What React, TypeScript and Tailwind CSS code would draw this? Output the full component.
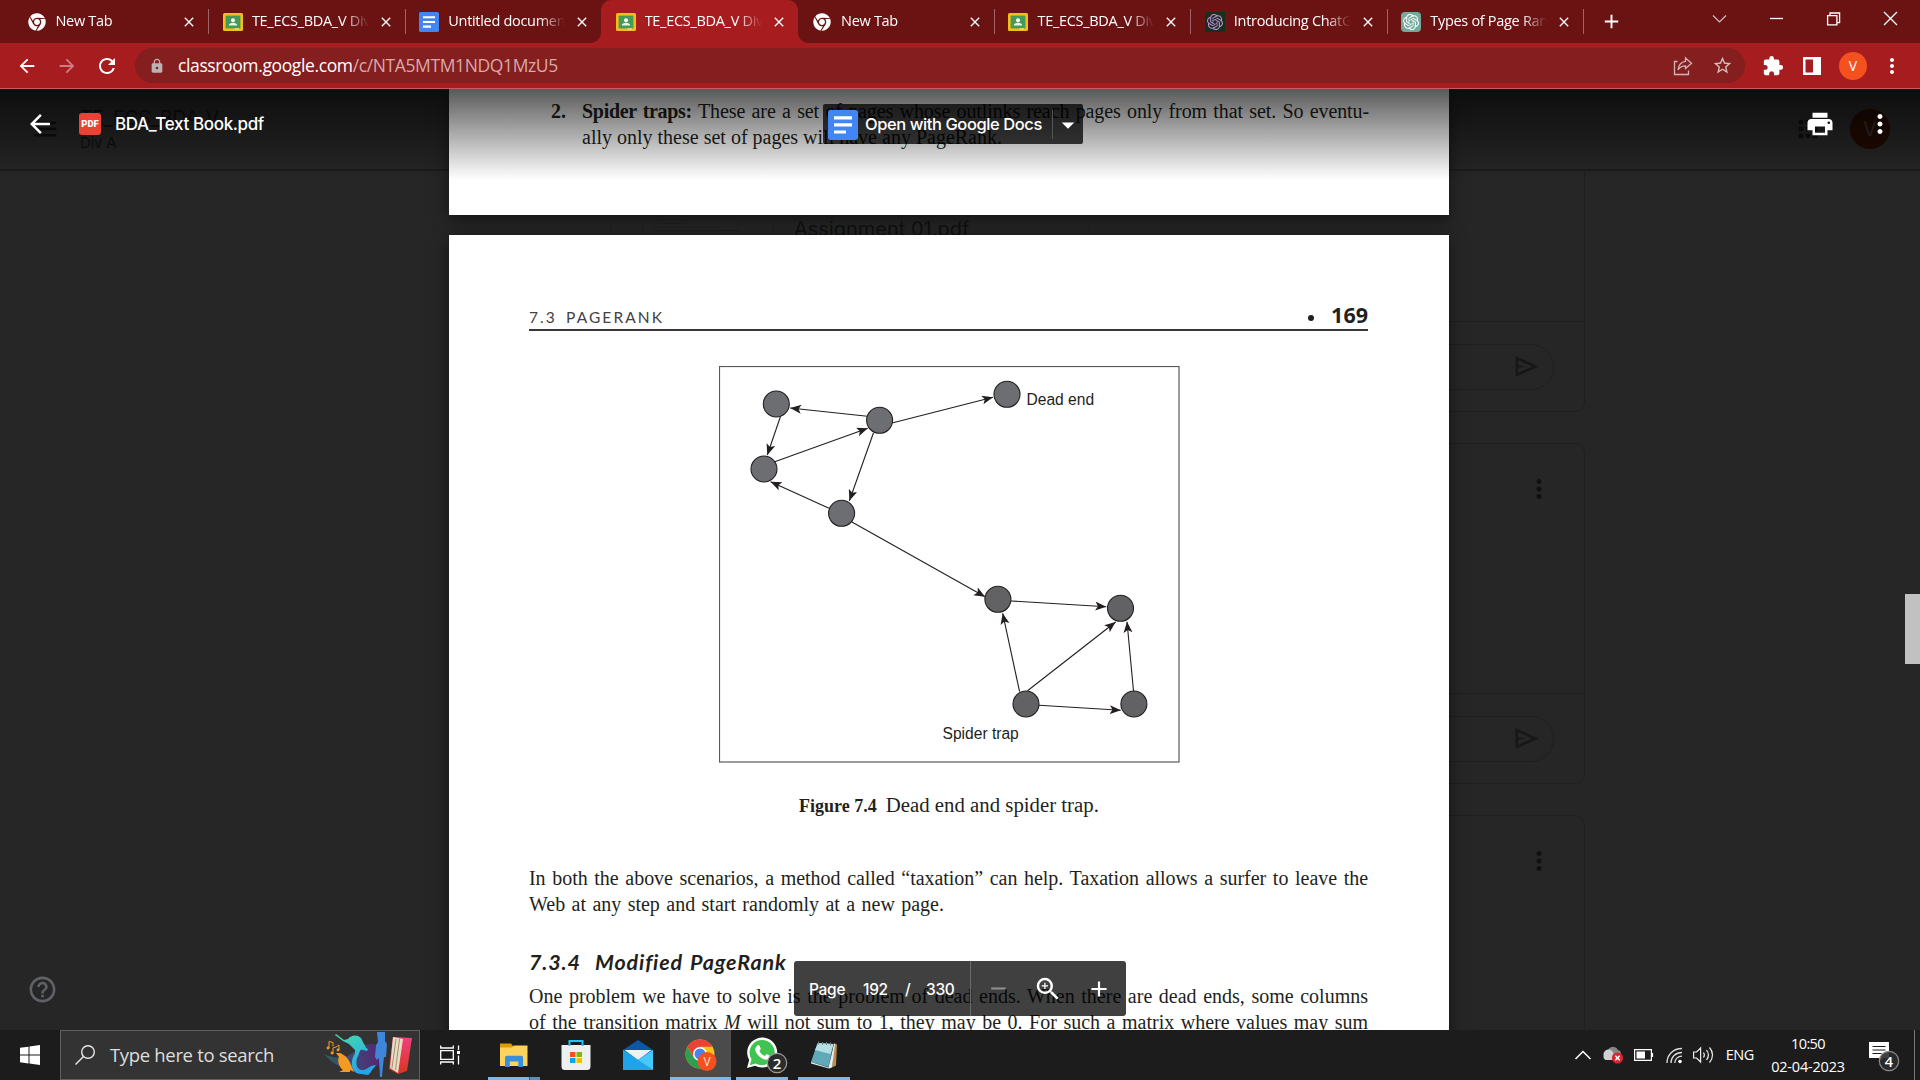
import React from "react";
import {
  MdAdd,
  MdArrowBack,
  MdArrowForward,
  MdClose,
  MdExtension,
  MdHelpOutline,
  MdLock,
  MdMenu,
  MdMoreVert,
  MdPrint,
  MdRefresh,
  MdRemove,
  MdStarOutline,
  MdZoomIn,
  MdArrowDropDown,
  MdApps,
} from "react-icons/md";
import { SiOpenai } from "react-icons/si";
import { FaChrome } from "react-icons/fa";

const UI = "font-['Open_Sans','Noto_Sans',sans-serif]";
const SERIF = "font-['Liberation_Serif',serif]";

/* ---------- favicons ---------- */

function ClassroomIcon() {
  return (
    <svg viewBox="0 0 20 20" className="h-5 w-5 shrink-0">
      <rect y="1" width="20" height="18" rx="1.5" fill="#f6bc1c" />
      <rect x="2.6" y="3.6" width="14.8" height="12.8" fill="#479a55" />
      <circle cx="10" cy="8.2" r="2" fill="#fff" />
      <path d="M5.8 13.6c0-2 2-2.8 4.2-2.8s4.2.8 4.2 2.8z" fill="#e6f4ea" />
      <path d="M11.5 16.4h4.5v1h-4.5z" fill="#fbe6a2" />
    </svg>
  );
}

function DocsIcon({ className }: { className: string }) {
  return (
    <svg viewBox="0 0 20 20" className={className}>
      <rect width="20" height="20" rx="1.6" fill="#4285f4" />
      <path d="M4 4.2h12v2.1H4zM4 8.9h12V11H4zM4 13.6h8v2.1H4z" fill="#fff" />
    </svg>
  );
}

type Fav = "chrome" | "class" | "docs" | "ai1" | "ai2";

function Favicon({ kind }: { kind: Fav }) {
  if (kind === "chrome")
    return (
      <span className="flex w-5 shrink-0 justify-center">
        <FaChrome className="h-[18px] w-[18px] text-white" />
      </span>
    );
  if (kind === "class") return <ClassroomIcon />;
  if (kind === "docs") return <DocsIcon className="h-5 w-5 shrink-0" />;
  if (kind === "ai1")
    return (
      <span className="flex h-5 w-5 shrink-0 items-center justify-center bg-[#15301c]">
        <SiOpenai className="h-4 w-4 text-[#c98be0]" />
      </span>
    );
  return (
    <span className="flex h-5 w-5 shrink-0 items-center justify-center rounded-sm bg-[#74aa9c]">
      <SiOpenai className="h-4 w-4 text-white" />
    </span>
  );
}

/* ---------- browser chrome ---------- */

const TABS: { kind: Fav; title: string; active?: boolean; sep?: boolean }[] = [
  { kind: "chrome", title: "New Tab", sep: true },
  { kind: "class", title: "TE_ECS_BDA_V Div A", sep: true },
  { kind: "docs", title: "Untitled document" },
  { kind: "class", title: "TE_ECS_BDA_V Div A", active: true },
  { kind: "chrome", title: "New Tab", sep: true },
  { kind: "class", title: "TE_ECS_BDA_V Div A", sep: true },
  { kind: "ai1", title: "Introducing ChatGPT", sep: true },
  { kind: "ai2", title: "Types of Page Rank", sep: true },
];

function TabStrip() {
  return (
    <div className="flex h-[43px] shrink-0 bg-[#6b1213] pl-3 text-white">
      {TABS.map((t, i) => (
        <div
          key={i}
          className={
            t.active
              ? "relative flex w-[196.4px] shrink-0 items-center rounded-t-[10px] bg-[#a71d1f] pr-[11px] pl-[14.5px]"
              : "relative flex w-[196.4px] shrink-0 items-center pr-[11px] pl-[14.5px]"
          }
        >
          {t.active && (
            <>
              <span className="absolute bottom-0 -left-[10px] h-[10px] w-[10px] bg-[radial-gradient(circle_at_0_0,#6b1213_9.5px,#a71d1f_10px)]" />
              <span className="absolute -right-[10px] bottom-0 h-[10px] w-[10px] bg-[radial-gradient(circle_at_100%_0,#6b1213_9.5px,#a71d1f_10px)]" />
            </>
          )}
          <Favicon kind={t.kind} />
          <span className="mb-[2px] ml-[9px] w-[117px] shrink-0 overflow-hidden text-[14.5px] leading-5 tracking-[-0.3px] whitespace-nowrap [mask-image:linear-gradient(90deg,#000_78%,transparent_100%)]">
            {t.title}
          </span>
          <MdClose className="ml-auto h-4 w-4 shrink-0" />
          {t.sep && (
            <span className="absolute top-[9px] -right-px h-[25px] w-px bg-[#a16465]" />
          )}
        </div>
      ))}
      <div className="flex w-[56px] items-center justify-center">
        <MdAdd className="h-[23px] w-[23px]" />
      </div>
      <div className="mr-px ml-auto flex h-[37px] items-center">
        <svg viewBox="0 0 57 37" className="w-[57px]" fill="none" stroke="#d9bcbc" strokeWidth="1.2">
          <path d="M22 15.5l6.5 6.5 6.5-6.5" />
        </svg>
        <svg viewBox="0 0 57 37" className="w-[57px]" fill="none" stroke="#fff" strokeWidth="1.3">
          <path d="M22 18.5h13" />
        </svg>
        <svg viewBox="0 0 57 37" className="w-[57px]" fill="none" stroke="#fff" strokeWidth="1.3">
          <path d="M22.6 15.6h9.3v9.3h-9.3zM25 15.4V13h9.6v9.6H32" />
        </svg>
        <svg viewBox="0 0 57 37" className="w-[57px]" fill="none" stroke="#fff" strokeWidth="1.3">
          <path d="M22 12l13 13M35 12l-13 13" />
        </svg>
      </div>
    </div>
  );
}

function AddressBar() {
  return (
    <div className="flex h-[46px] shrink-0 items-center border-b border-[#c2605e] bg-[#a71d1f] text-white">
      <MdArrowBack className="ml-[16px] h-[22px] w-[22px]" />
      <MdArrowForward className="ml-[18px] h-[22px] w-[22px] text-[#ce7f80]" />
      <MdRefresh className="ml-[17px] h-6 w-6" />
      <div className="ml-[16px] flex h-[35px] w-[1610px] items-center rounded-full bg-[#841e1f]">
        <MdLock className="ml-[14px] h-4 w-4 text-[#b9b3b6]" />
        <span className="mb-px ml-[13px] text-[17.5px] leading-6 tracking-[-0.38px] text-[#d9a9a9]">
          <span className="text-white">classroom.google.com</span>/c/NTA5MTM1NDQ1MzU5
        </span>
        <svg viewBox="0 0 20 20" className="mr-[19px] ml-auto h-5 w-5" fill="none" stroke="#d3b4b4" strokeWidth="1.3">
          <path d="M4.5 5.5H1.5v13h14v-4" />
          <path d="M12.5 2l6 5.3-6 5.2V9.8c-3.5 0-6 1.300-7.500 4.200.5-4.500 3-8 7.500-8.600z" />
        </svg>
        <MdStarOutline className="mr-[12px] h-[21px] w-[21px] text-[#d8bcbc]" />
      </div>
      <MdExtension className="ml-[17px] h-[22px] w-[22px]" />
      <svg viewBox="0 0 18 18" className="ml-[19px] h-[18px] w-[18px]">
        <path d="M0 0h18v18H0zM2.500 2.500v13h7.500v-13z" fill="#fff" fillRule="evenodd" />
      </svg>
      <div className="ml-[18px] flex h-7 w-7 items-center justify-center rounded-full bg-[#f4511e] text-[14px]">
        V
      </div>
      <MdMoreVert className="ml-[13px] h-6 w-6" />
    </div>
  );
}

/* ---------- dimmed page below the viewer ---------- */

function DimCard({ menu = true }: { menu?: boolean }) {
  return (
    <div className="flex h-[341px] shrink-0 flex-col rounded-[10px] border border-[#1f1f1f]">
      {menu && <MdMoreVert className="mt-[30px] mr-[30px] h-[30px] w-[30px] self-end text-[#101010]" />}
      <div className="mt-auto flex h-[90px] items-center justify-end border-t border-[#1f1f1f] pr-[30px]">
        <div className="flex h-[46px] w-[500px] items-center justify-end rounded-full border border-[#1f1f1f] pr-[12px]">
          <svg viewBox="0 0 24 24" className="h-[29px] w-[29px]" fill="#161718">
            <path d="M3 3.500V20.500L22 12 3 3.500zm2 3.200L16.800 12 5 17.300V13l6-1-6-1V6.700z" />
          </svg>
        </div>
      </div>
    </div>
  );
}

function DimmedClassroom() {
  return (
    <div className="absolute inset-0 flex flex-col overflow-hidden bg-[#262626]">
      <div className="flex h-[82px] shrink-0 items-center border-b-2 border-[#1d1d1d] font-['Inter',sans-serif] text-[#0f0f0f]">
        <MdMenu className="ml-[30px] h-[30px] w-[30px]" />
        <div className="ml-[20px] flex flex-col">
          <span className="h-[28px] text-[20px] leading-7 tracking-[-0.6px]">TE_ECS_BDA_V</span>
          <span className="h-[22px] text-[15px] leading-[22px] tracking-[-0.2px]">Div A</span>
        </div>
        <MdApps className="mr-[28px] ml-auto h-[28px] w-[28px]" />
        <div className="mr-[30px] flex h-10 w-10 items-center justify-center rounded-full bg-[#210a02] text-[20px] text-[#332c2a]">
          V
        </div>
      </div>
      <div className="flex justify-end pr-[335px]">
        <div className="-mt-[100px] flex w-[684px] flex-col gap-[31px] [clip-path:inset(100px_0_0_0)]">
          <DimCard menu={false} />
          <DimCard />
          <DimCard />
        </div>
      </div>
    </div>
  );
}

/* ---------- PDF pages ---------- */

function Line({ children, className }: { children: React.ReactNode; className: string }) {
  return (
    <p className={`h-[26px] leading-[26px] whitespace-nowrap [text-align-last:justify] ${className}`}>
      {children}
    </p>
  );
}

const NODES_A = [
  [57.3, 38],
  [160.6, 54.3],
  [288, 28.3],
  [45, 103],
  [122.6, 147.3],
];
const NODES_B = [
  [278.9, 233.3],
  [401.5, 242.3],
  [307, 338],
  [414.9, 338],
];
const EDGES = [
  [148.3, 50.3, 71.2, 42],
  [61.4, 50.7, 48.3, 89],
  [55.7, 95.7, 148.8, 62.3],
  [174, 56.7, 274, 31.3],
  [154.5, 66.7, 130.4, 134.7],
  [110, 142.3, 51.6, 115.7],
  [132.9, 156, 266.1, 230.7],
  [292, 235, 387.3, 240.7],
  [300.6, 325.7, 283.7, 247.3],
  [308.5, 324.7, 396.6, 256],
  [414.5, 325, 408, 255.7],
  [320, 339.3, 401.8, 344.3],
];

function Figure() {
  return (
    <svg viewBox="0 0 461 397" className="mt-[35px] ml-[190px] h-[397px] w-[461px]">
      <defs>
        <marker id="tip" markerUnits="userSpaceOnUse" markerWidth="12" markerHeight="10" refX="11" refY="4.500" orient="auto">
          <path d="M0 0L11 4.500 0 9l2.600-4.500z" fill="#231f20" />
        </marker>
      </defs>
      <rect x="0.5" y="0.5" width="459.5" height="395.500" fill="none" stroke="#58595b" strokeWidth="1.2" />
      {EDGES.map((e, i) => (
        <line key={i} x1={e[0]} y1={e[1]} x2={e[2]} y2={e[3]} stroke="#231f20" strokeWidth="1.1" markerEnd="url(#tip)" />
      ))}
      {NODES_A.map((n, i) => (
        <circle key={i} cx={n[0]} cy={n[1]} r="13" fill="#6d6e71" stroke="#231f20" strokeWidth="1.1" />
      ))}
      {NODES_B.map((n, i) => (
        <circle key={i} cx={n[0]} cy={n[1]} r="13" fill="#626264" stroke="#231f20" strokeWidth="1.1" />
      ))}
      <g fontFamily="Liberation Sans, sans-serif" fontSize="15.6" fill="#231f20">
        <text x="307.500" y="39">Dead end</text>
        <text x="223.500" y="373">Spider trap</text>
      </g>
    </svg>
  );
}

function PdfPages() {
  return (
    <div className="relative flex h-full flex-col items-center gap-5 overflow-hidden text-[#231f20]">
      <div className={`flex h-[126px] w-[1000px] shrink-0 bg-white pt-[9px] pl-[102px] text-[20px] shadow-[0_4px_16px_rgba(0,0,0,0.5)] ${SERIF}`}>
        <b className="w-[31px] leading-[26px]">2.</b>
        <div>
          <Line className="w-[787px] tracking-[-0.1px]">
            <b className="tracking-[-0.3px]">Spider traps:</b> These are a set of pages whose outlinks reach pages only from that set. So eventu-
          </Line>
          <Line className="w-[420px]">ally only these set of pages will have any PageRank.</Line>
        </div>
      </div>
      <div className="relative flex h-[1294px] w-[1000px] shrink-0 flex-col bg-white px-20 pt-[70px] shadow-[0_4px_16px_rgba(0,0,0,0.5)]">
        <Assignment />
        <div className="flex h-[26px] w-[839px] items-end border-b-2 border-[#3a3536]">
          <span className="mb-px font-['Lato',sans-serif] text-[15.500px] leading-[22px] tracking-[2.1px] text-[#454142] [word-spacing:3px]">
            7.3 PAGERANK
          </span>
          <span className="mb-[8px] ml-auto h-[6px] w-[6px] rounded-full bg-[#231f20]" />
          <span className="mb-[2px] ml-[17px] font-['Open_Sans',sans-serif] text-[21.500px] leading-[25px] font-bold">169</span>
        </div>
        <Figure />
        <div className={`mt-[29px] flex h-[26px] items-baseline justify-center gap-[9px] leading-[26px] ${SERIF}`}>
          <b className="text-[18px]">Figure 7.4</b>
          <span className="text-[20.800px]">Dead end and spider trap.</span>
        </div>
        <div className={`mt-[47px] text-[20px] ${SERIF}`}>
          <Line className="w-[839px] tracking-[-0.05px]">
            In both the above scenarios, a method called “taxation” can help. Taxation allows a surfer to leave the
          </Line>
          <Line className="w-[415px]">Web at any step and start randomly at a new page.</Line>
        </div>
        <h2 className="mt-[32px] h-[26px] font-['Lato',sans-serif] text-[21.500px] leading-[26px] font-bold tracking-[0.85px] whitespace-pre italic [word-spacing:1.5px]">
          7.3.4{"  "}Modified PageRank
        </h2>
        <div className={`mt-[8px] text-[20px] ${SERIF}`}>
          <Line className="w-[839px]">
            One problem we have to solve is the problem of dead ends. When there are dead ends, some columns
          </Line>
          <Line className="w-[839px]">
            of the transition matrix <i>M</i> will not sum to 1, they may be 0. For such a matrix where values may sum
          </Line>
        </div>
      </div>
    </div>
  );
}

/* Strip of the dimmed attachment row seen between two sheets */
function Assignment() {
  return (
    <div className="absolute -top-5 left-[161px] flex h-5 w-[480px] overflow-hidden border-x border-[#1c1c1c] text-[#0e0e0e]">
      <div className="ml-[31px] w-[132px] border-x border-[#1c1c1c]">
        <div className="mt-[4px] ml-[12px] h-px w-[80px] bg-[#1a1a1a]" />
        <div className="mt-[3px] ml-[16px] h-px w-[26px] bg-[#1a1a1a]" />
        <div className="mt-[3px] ml-[12px] h-px w-[64px] bg-[#1a1a1a]" />
        <div className="mt-[2px] ml-[12px] h-px w-[84px] bg-[#1a1a1a]" />
      </div>
      <span className="ml-[20px] font-['Inter',sans-serif] text-[20px] leading-[28px] whitespace-nowrap">
        Assignment 01.pdf
      </span>
    </div>
  );
}

/* ---------- viewer overlays ---------- */

function ViewerHeader() {
  return (
    <div className="absolute inset-x-0 top-0 flex h-[91px] items-start bg-linear-to-b from-black/65 to-transparent font-['Inter',sans-serif] text-white">
      <MdArrowBack className="mt-[20px] ml-[25px] h-[30px] w-[30px]" />
      <div className="mt-[24px] ml-[24px] flex h-[22px] w-[22px] items-center justify-center rounded-[3px] bg-[#ea4335] font-['Roboto',sans-serif] text-[9.500px] font-black">
        PDF
      </div>
      <span className="mt-[23px] ml-[14px] w-[560px] text-[17px] leading-6 font-medium tracking-[-0.36px]">
        BDA_Text Book.pdf
      </span>
      <div className="absolute top-[15px] left-[823px] flex h-[40px] w-[260px] items-center rounded-[2px] bg-black/75">
        <DocsIcon className="mt-px ml-[5px] h-[30px] w-[30px]" />
        <span className="mt-px ml-[7px] text-[16.500px] font-medium tracking-[-0.42px] whitespace-nowrap">
          Open with Google Docs
        </span>
        <span className="ml-auto h-[29px] w-px bg-[#555]" />
        <MdArrowDropDown className="mt-px h-[30px] w-[30px]" />
      </div>
      <MdPrint className="mt-[20px] ml-auto h-[30px] w-[30px]" />
      <MdMoreVert className="mt-[20px] mr-[25px] ml-[30px] h-[30px] w-[30px]" />
    </div>
  );
}

function PageToolbar() {
  return (
    <div className="absolute top-[872px] left-[794px] flex h-[55px] w-[332px] items-center rounded-[3px] bg-black/75 font-['Inter',sans-serif] text-[15.500px] font-medium tracking-[-0.3px] text-white">
      <span className="mt-[2px] ml-[15px] w-[54px]">Page</span>
      <span className="mt-[2px] w-[42px]">192</span>
      <span className="mt-[2px] w-[21px]">/</span>
      <span className="mt-[2px] w-[44px]">330</span>
      <span className="h-full w-px bg-[#6b6b6b]" />
      <MdRemove className="ml-[15px] h-[25px] w-[25px] text-[#8e8e8e]" />
      <MdZoomIn className="ml-[22px] h-[30px] w-[30px]" />
      <MdAdd className="ml-[23px] h-[26px] w-[26px]" />
    </div>
  );
}

/* ---------- taskbar ---------- */

function SearchArt() {
  return (
    <svg viewBox="0 0 90 46" className="ml-auto h-[46px] w-[90px]">
      <defs>
        <linearGradient id="wave" x1="0" x2="1">
          <stop offset="0" stopColor="#2f5f5c" />
          <stop offset="0.5" stopColor="#41457a" />
          <stop offset="1" stopColor="#552770" />
        </linearGradient>
        <linearGradient id="mer" x1="0" y1="0" x2="0.4" y2="1">
          <stop offset="0" stopColor="#46dcae" />
          <stop offset="1" stopColor="#23a5ea" />
        </linearGradient>
        <linearGradient id="book" x1="0" y1="0" x2="0" y2="1">
          <stop offset="0" stopColor="#f0407c" />
          <stop offset="1" stopColor="#d8371f" />
        </linearGradient>
      </defs>
      <path d="M0 22c6 3 12 4 19 3 11-1 15-13 30-13l8 2v20c-8-2-13 4-22 4C20 38 8 32 0 22z" fill="url(#wave)" />
      <path d="M12 2l8 6 4-1c3-4 9-5 13-1l3 6c2 2 1 4 4 5l-1 2-4-1c-4-1-3 3-5 6-3 5-2 14 4 14 5 0 8-5 14-5l-2 3c-2 1-3 5-6 7l-7-1c-7 0-10-6-9-13 1-6 4-7 3-11l-6-6-6-3-8-6z" fill="url(#mer)" />
      <path d="M12 21l4 0c5 2 9 6 11 12l3 7-4-2v2h-11l4-2c-4-3-6-9-4-13z" fill="#f59a23" />
      <path d="M5 16V9.500l4 1v4M9 22v-6l3-1M15 18v-5l-3 2" stroke="#f59a23" strokeWidth="1" fill="none" />
      <circle cx="4" cy="16" r="1.400" fill="#f59a23" />
      <circle cx="8" cy="21" r="1.400" fill="#f59a23" />
      <circle cx="14" cy="18" r="1.400" fill="#f59a23" />
      <path d="M53 0h8v9l2 3-1 13h-2l-1 9-1 11h-2l-1-19-2 2-2-3 1-12 2-3z" fill="#3f86d8" />
      <path d="M69 5l19 1-5 33-9 3-9-5z" fill="url(#book)" />
      <path d="M69 5l10 2-5 34-8-5z" fill="#e8dcc4" />
      <path d="M72 7l-4 29M75.500 7l-4 31" stroke="#a48c6c" strokeWidth="1" />
    </svg>
  );
}

function TaskIcon({ children, running, active, stacked }: { children: React.ReactNode; running?: boolean; active?: boolean; stacked?: boolean }) {
  return (
    <div
      className={
        active
          ? "relative flex w-[61px] shrink-0 items-center justify-center bg-[#4b4b4b]"
          : "relative flex w-[62px] shrink-0 items-center justify-center"
      }
    >
      {children}
      {running && (
        <span
          className={
            active
              ? "absolute inset-x-0 bottom-0 h-[3px] bg-[#76b9ed]"
              : "absolute inset-x-[5px] bottom-0 h-[3px] bg-[#76b9ed]"
          }
        />
      )}
      {stacked && <span className="absolute right-[5px] bottom-0 h-[3px] w-[11px] border-l border-[#3b5d77] bg-[#5a8fb8]" />}
    </div>
  );
}

function Taskbar() {
  return (
    <div className="flex h-[50px] shrink-0 bg-[#1c1c1c] text-white">
      <div className="flex w-[60px] items-center justify-center">
        <svg viewBox="0 0 20 20" className="h-5 w-5" fill="#fff">
          <path d="M0 2.800L8.500 1.700V9.500H0zM9.500 1.500L20 0v9.500H9.500zM0 10.500h8.500v7.900L0 17.200zM9.500 10.500H20V20L9.500 18.500z" />
        </svg>
      </div>
      <div className="flex w-[360px] items-center border border-[#606060] bg-[#333] pr-[5px]">
        <svg viewBox="0 0 20 20" className="ml-[14px] h-5 w-5" fill="none" stroke="#e8e8e8" strokeWidth="1.400">
          <circle cx="13" cy="7" r="6.300" />
          <path d="M8.500 11.500L0.500 19.500" />
        </svg>
        <span className="ml-[15px] text-[18.500px] leading-6 tracking-[-0.33px] whitespace-nowrap text-[#dedede]">
          Type here to search
        </span>
        <SearchArt />
      </div>
      <div className="flex w-[63px] items-center justify-center pr-[3px]">
        <svg viewBox="0 0 20 20" className="h-5 w-5" fill="none" stroke="#fff" strokeWidth="1.300">
          <path d="M0.700 0.500V3h12.600V0.500M0.700 19.500V17h12.600v2.500M0.700 5.700h12.600v8.600H0.700zM18.500 0.500v4.500M18.500 10.500v9" />
          <path d="M17 6h3v3h-3z" fill="#fff" stroke="none" />
        </svg>
      </div>
      <TaskIcon running stacked>
        <svg viewBox="0 0 28 26" className="h-[26px] w-[28px]">
          <path d="M0 1.500h11l2.500 3V9H0z" fill="#dd9b05" />
          <path d="M0 5.500h12l2-2h13.500V24H0z" fill="#fdd35d" />
          <path d="M5 25V15.500c0-1 .8-1.800 1.800-1.800h14.500c1 0 1.800.8 1.800 1.800V25h-4.800v-5.500H9.800V25z" fill="#3a8fdd" />
        </svg>
      </TaskIcon>
      <TaskIcon>
        <svg viewBox="0 0 30 32" className="h-[32px] w-[30px]">
          <path d="M0.500 6h29v21.500a3.500 3.500 0 01-3.500 3.500h-22a3.500 3.500 0 01-3.500-3.500z" fill="#efefef" />
          <path d="M7.500 7V1h15v6h-2V3h-11v4z" fill="#2dbdf4" />
          <path d="M9 13h5.500v5H9z" fill="#f25022" />
          <path d="M15.500 13H21v5h-5.500z" fill="#7fba00" />
          <path d="M9 19h5.500v5H9z" fill="#00a4ef" />
          <path d="M15.500 19H21v5h-5.500z" fill="#ffb900" />
        </svg>
      </TaskIcon>
      <TaskIcon>
        <svg viewBox="0 0 30 30" className="h-[30px] w-[30px]">
          <path d="M0 10L15 0l15 10v10H0z" fill="#0c57a8" />
          <path d="M1.500 10h27L15 20z" fill="#f1f1f1" />
          <path d="M0 10L15 20l15-10V30H0z" fill="#2ab0f0" />
          <path d="M15 20L30 10V30z" fill="#45c8fa" />
          <path d="M0 10L30 30H0z" fill="#1fa3ea" />
        </svg>
      </TaskIcon>
      <div className="w-px" />
      <TaskIcon running active>
        <svg viewBox="0 0 32 32" className="h-8 w-8">
          <circle cx="15" cy="15" r="14.500" fill="#fbc116" />
          <path d="M15 .5A14.500 14.500 0 0127.600 7.800H15L8.700 18.600 2.400 7.800A14.500 14.500 0 0115 .5z" fill="#ea4335" />
          <path d="M2.400 7.800A14.500 14.500 0 0015 29.500l6.300-10.800L8.700 18.600z" fill="#2f9e4f" />
          <circle cx="15" cy="15" r="7" fill="#fff" />
          <circle cx="15" cy="15" r="5.500" fill="#4285f4" />
          <circle cx="22" cy="22.500" r="9.500" fill="#f4511e" />
          <text x="22" y="27" textAnchor="middle" fontFamily="Roboto, sans-serif" fontSize="12" fill="#fcd7ca">V</text>
        </svg>
      </TaskIcon>
      <TaskIcon running>
        <svg viewBox="0 0 42 38" className="ml-[10px] h-[38px] w-[42px]">
          <path d="M1 32l2.200-8A15 15 0 1116 31.500a15 15 0 01-7-1.700z" fill="#fff" />
          <path d="M3.800 29.200l1.700-5.900A12.600 12.600 0 1116 29.100a12.600 12.600 0 01-6.300-1.700z" fill="#3fc351" />
          <path d="M11.500 9.500c.6-.6 1.600-.5 2 .3l1.200 2.700c.2.500 0 1-1.300 2.400 1.300 2.500 3 4 5.400 5 1.200-1.500 1.600-1.900 2.200-1.600l2.800 1.400c.8.500.5 2-.3 2.900-1.500 1.500-4 1.600-7 .1-3.500-1.700-6.300-5-7.200-8.100-.5-2 .9-4 2.200-5.100z" fill="#fff" />
          <circle cx="31" cy="27" r="9.700" fill="#2c2c2c" stroke="#9a9a9a" strokeWidth="1.200" />
          <text x="31" y="32.500" textAnchor="middle" fontFamily="Open Sans, sans-serif" fontSize="15" fontWeight="600" fill="#fff">2</text>
        </svg>
      </TaskIcon>
      <TaskIcon running>
        <svg viewBox="0 0 30 30" className="h-[30px] w-[30px]">
          <path d="M25 3l3 1.500-1 21-4 2z" fill="#b98d4e" />
          <path d="M8.500 3l16 1-5 23-17.500-5z" fill="#5fa9b9" />
          <path d="M9 3l15.500 1-3 10-15.500-4z" fill="#b5dfe6" />
          <path d="M2 22l17.500 5.500L25 4l1 .5-3 23-3 1L2 23.500z" fill="#e7eef0" />
          <path d="M9.500 1.500v3M13.500 2v3M17.500 2v3M21.500 2.500v3" stroke="#6f8388" strokeWidth="1" />
        </svg>
      </TaskIcon>
      <div className="ml-auto flex items-center">
        <svg viewBox="0 0 18 10" className="h-[10px] w-[18px]" fill="none" stroke="#fff" strokeWidth="1.500">
          <path d="M1.500 9L9 1.500 16.500 9" />
        </svg>
        <svg viewBox="0 0 22 18" className="ml-[10px] h-[18px] w-[22px]">
          <circle cx="11" cy="6" r="5.300" fill="#868686" />
          <circle cx="15" cy="8" r="4" fill="#868686" />
          <circle cx="6.500" cy="8.500" r="5" fill="#d0d0d0" />
          <path d="M2 9h11v5H4.500C2 14 .8 11.500 2 9z" fill="#d0d0d0" />
          <circle cx="15.500" cy="12" r="5.600" fill="#d92530" />
          <path d="M13.300 9.800l4.400 4.400M17.700 9.800l-4.400 4.400" stroke="#fff" strokeWidth="1.500" />
        </svg>
        <svg viewBox="0 0 20 12" className="ml-[10px] h-3 w-5" fill="none" stroke="#fff" strokeWidth="1.200">
          <path d="M.6.6h16.800v10.800H.6zM18.500 4v4" />
          <path d="M2.500 2.500h8.500v7H2.500z" fill="#fff" stroke="none" />
        </svg>
        <svg viewBox="0 0 17 17" className="ml-[12px] h-[17px] w-[17px]" fill="none" stroke="#ddd" strokeWidth="1.300">
          <path d="M1 16C1 8 7 1.500 16 1.500M5 16C5 10 9.500 5.500 16 5.500M8.800 16c0-4 3-6.800 7.200-6.800" />
          <circle cx="14" cy="14.500" r="1.800" fill="#fff" stroke="none" />
        </svg>
        <svg viewBox="0 0 21 18" className="ml-[10px] h-[18px] w-[21px]" fill="none" stroke="#eee" strokeWidth="1.200">
          <path d="M.6 6v6h3l4 4V2l-4 4zM10.500 6.500c1 1.500 1 3.500 0 5M13.500 4c2.300 3 2.300 7 0 10M16.500 1.500c4 4.500 4 10.500 0 15" />
        </svg>
        <span className="ml-[12px] text-[14.500px] tracking-[-0.400px]">ENG</span>
        <div className="ml-[16px] flex w-[76px] flex-col items-center text-[14.500px] leading-[23px] tracking-[-0.200px] whitespace-nowrap">
          <span className="tracking-[-0.6px]">10:50</span>
          <span>02-04-2023</span>
        </div>
        <svg viewBox="0 0 32 32" className="mt-1 ml-[22px] h-8 w-8">
          <path d="M1 1h20v16h-6l-4 4v-4H1z" fill="#fff" />
          <path d="M4.500 5.500h13M4.500 9h13M4.500 12.500h9" stroke="#1c1c1c" strokeWidth="1.200" />
          <circle cx="21" cy="20" r="9.700" fill="#2c2c2c" fillOpacity=".9" stroke="#8a8a8a" strokeWidth="1.200" />
          <text x="21" y="25.500" textAnchor="middle" fontFamily="Open Sans, sans-serif" fontSize="14.500" fontWeight="600" fill="#fff">4</text>
        </svg>
        <span className="mr-[5px] ml-[14px] h-[50px] w-px bg-[#777]" />
      </div>
    </div>
  );
}

export default function App() {
  return (
    <div className={`flex h-[1080px] w-[1920px] flex-col overflow-hidden ${UI}`}>
      <TabStrip />
      <AddressBar />
      <div className="relative h-[941px] shrink-0 overflow-hidden">
        <DimmedClassroom />
        <div className="relative h-full pr-[22px]">
          <PdfPages />
        </div>
        <ViewerHeader />
        <PageToolbar />
        <MdHelpOutline className="absolute bottom-[25px] left-[27px] h-[31px] w-[31px] text-[#5f6368]" />
        <span className="absolute top-[505px] right-0 h-[70px] w-[15px] bg-[#c1c1c1]" />
      </div>
      <Taskbar />
    </div>
  );
}
